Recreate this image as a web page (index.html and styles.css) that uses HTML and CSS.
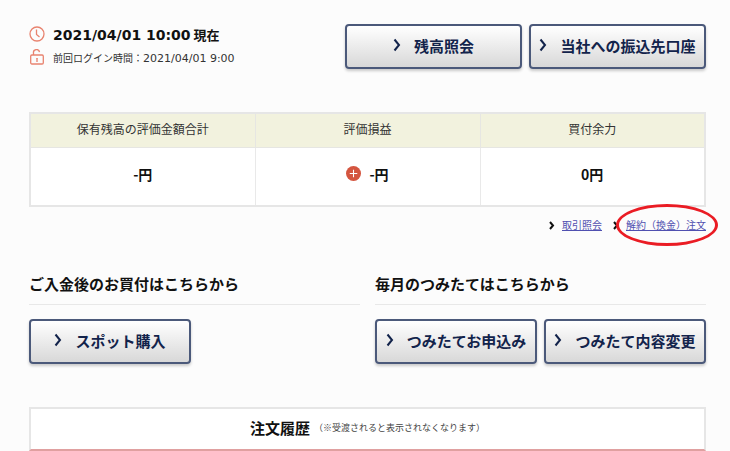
FILE: index.html
```html
<!DOCTYPE html>
<html lang="ja">
<head>
  <meta charset="UTF-8">
  <meta name="viewport" content="width=device-width, initial-scale=1.0">
  <title>口座情報</title>
  <link rel="stylesheet" href="styles.css">
</head>
<body>
  <main class="container">

    <header class="top">
      <div class="status">
        <p class="status-now">
          <svg class="status-icon" viewBox="0 0 16 16" aria-hidden="true">
            <circle cx="8" cy="8" r="7"/>
            <path d="M7.5 3.5V8.5L10.5 11"/>
          </svg>
          <span><time>2021/04/01 10:00</time> 現在</span>
        </p>
        <p class="status-login">
          <svg class="status-icon" viewBox="0 0 16 16" aria-hidden="true">
            <rect x="1.7" y="6" width="12.6" height="9" rx="1.2"/>
            <path d="M4.5 6V4a3 3 0 0 1 6-.8M8 10v3M7.2 9.7h1.6"/>
          </svg>
          <span>前回ログイン時間：<time>2021/04/01 9:00</time></span>
        </p>
      </div>
      <div class="buttons buttons-top">
        <button type="button" class="btn">
          <svg class="chevron" viewBox="0 0 8 14" aria-hidden="true"><path d="M1.5 1.5L6 7l-4.5 5.5"/></svg>
          残高照会
        </button>
        <button type="button" class="btn">
          <svg class="chevron" viewBox="0 0 8 14" aria-hidden="true"><path d="M1.5 1.5L6 7l-4.5 5.5"/></svg>
          当社への振込先口座
        </button>
      </div>
    </header>

    <table class="summary">
      <thead>
        <tr>
          <th scope="col">保有残高の評価金額合計</th>
          <th scope="col">評価損益</th>
          <th scope="col">買付余力</th>
        </tr>
      </thead>
      <tbody>
        <tr>
          <td>-円</td>
          <td>
            <span class="profit">
              <svg class="plus" viewBox="0 0 14 14" aria-hidden="true">
                <circle cx="7" cy="7" r="7"/>
                <path d="M7 3.5v7M3.5 7h7"/>
              </svg>
              -円
            </span>
          </td>
          <td>0円</td>
        </tr>
      </tbody>
    </table>

    <nav class="links">
      <span class="link">
        <svg class="arrow" viewBox="0 0 6 9" aria-hidden="true"><path d="M1 1l3 3.500L1 8"/></svg>
        <a href="#">取引照会</a>
      </span>
      <span class="link link-marked">
        <svg class="arrow" viewBox="0 0 6 9" aria-hidden="true"><path d="M1 1l3 3.500L1 8"/></svg>
        <a href="#">解約（換金）注文</a>
      </span>
    </nav>

    <div class="sections">
      <section>
        <h2>ご入金後のお買付はこちらから</h2>
        <div class="buttons">
          <button type="button" class="btn">
            <svg class="chevron" viewBox="0 0 8 14" aria-hidden="true"><path d="M1.5 1.5L6 7l-4.5 5.5"/></svg>
            スポット購入
          </button>
        </div>
      </section>
      <section>
        <h2>毎月のつみたてはこちらから</h2>
        <div class="buttons">
          <button type="button" class="btn">
            <svg class="chevron" viewBox="0 0 8 14" aria-hidden="true"><path d="M1.5 1.5L6 7l-4.5 5.5"/></svg>
            つみたてお申込み
          </button>
          <button type="button" class="btn">
            <svg class="chevron" viewBox="0 0 8 14" aria-hidden="true"><path d="M1.5 1.5L6 7l-4.5 5.5"/></svg>
            つみたて内容変更
          </button>
        </div>
      </section>
    </div>

    <section class="history">
      <h2>注文履歴</h2>
      <small>（※受渡されると表示されなくなります）</small>
    </section>

  </main>
</body>
</html>
```
FILE: styles.css
```css
* {
  box-sizing: border-box;
  margin: 0;
  padding: 0;
}
body {
  font-family: "Noto Sans CJK JP", sans-serif;
  background-color: #fcfcfc;
  color: #111;
}
.container {
  padding: 24px 24px 0 29px;
}

/* date and main buttons */
.top {
  display: flex;
  justify-content: space-between;
  align-items: flex-start;
}
.status p {
  display: flex;
  align-items: center;
  gap: 8px;
  height: 20px;
}
.status-icon {
  width: 16px;
  height: 16px;
  fill: none;
  stroke: #e8836f;
  stroke-width: 1.3;
}
.status time {
  font-family: "DejaVu Sans", sans-serif;
}
.status .status-now {
  font-size: 13px;
  font-weight: bold;
  margin-bottom: 3px;
}
.status-now time {
  font-size: 14px;
}
.status-login {
  font-size: 10px;
  color: #333;
}
.status-login time {
  font-size: 11px;
}

.buttons {
  display: grid;
  grid-template-columns: 1fr 1fr;
  gap: 7px;
}
.buttons-top {
  width: 361px;
}
.btn {
  display: flex;
  align-items: center;
  justify-content: center;
  gap: 13px;
  height: 45px;
  padding-bottom: 3px;
  border: 2px solid #4b597a;
  border-radius: 4px;
  background: linear-gradient(#fff, #d8d8d8);
  box-shadow: 0 2px 3px rgba(0, 0, 0, 0.2);
  color: #12234b;
  font-family: inherit;
  font-size: 15px;
  font-weight: bold;
  white-space: nowrap;
  cursor: pointer;
}
.btn:hover {
  background: #eee;
}
.chevron {
  width: 8px;
  height: 14px;
  fill: none;
  stroke: #12234b;
  stroke-width: 2;
}

/* balance summary */
.summary {
  width: 100%;
  margin-top: 43px;
  table-layout: fixed;
  border-collapse: collapse;
  border: 2px solid #e6e6e6;
  background-color: #fff;
  text-align: center;
}
.summary th {
  height: 34px;
  padding-bottom: 3px;
  border: 1px solid #e6e6e2;
  background-color: #f2f2de;
  color: #333;
  font-size: 12px;
  font-weight: normal;
}
.summary td {
  height: 59px;
  padding-bottom: 4px;
  border: 1px solid #e9e9e9;
  font-size: 14px;
  font-weight: bold;
}
.profit {
  display: inline-flex;
  align-items: center;
  gap: 8px;
}
.plus {
  width: 15px;
  height: 15px;
  fill: #d4553f;
  stroke: #fff;
}
.plus circle {
  stroke: none;
}

.links {
  display: flex;
  justify-content: flex-end;
  gap: 11px;
  margin-top: 10px;
  font-size: 10px;
  line-height: 16px;
}
.link {
  position: relative;
  display: flex;
  align-items: center;
  gap: 7px;
}
.link a {
  color: #5050b0;
}
.arrow {
  width: 6px;
  height: 9px;
  fill: none;
  stroke: #111;
  stroke-width: 2;
}
/* red circle drawn over the link */
.link-marked::after {
  content: "";
  position: absolute;
  inset: -13px -12px -13px 3px;
  border: 3px solid #ea1c24;
  border-radius: 50%;
  pointer-events: none;
}

/* purchase sections */
.sections {
  display: grid;
  grid-template-columns: 1fr 1fr;
  gap: 15px;
  margin-top: 41px;
}
h2 {
  font-size: 15px;
  line-height: 20px;
}
.sections h2 {
  padding-bottom: 10px;
  margin-bottom: 14px;
  border-bottom: 1px solid #e8e8e8;
}

/* order history */
.history {
  display: flex;
  justify-content: center;
  align-items: center;
  gap: 4px;
  height: 44px;
  padding-bottom: 3px;
  margin-top: 43px;
  border: 2px solid #e6e6e6;
  border-bottom-color: #e0a0a0;
  background-color: #fff;
}
.history small {
  color: #444;
  font-size: 9px;
}
```
